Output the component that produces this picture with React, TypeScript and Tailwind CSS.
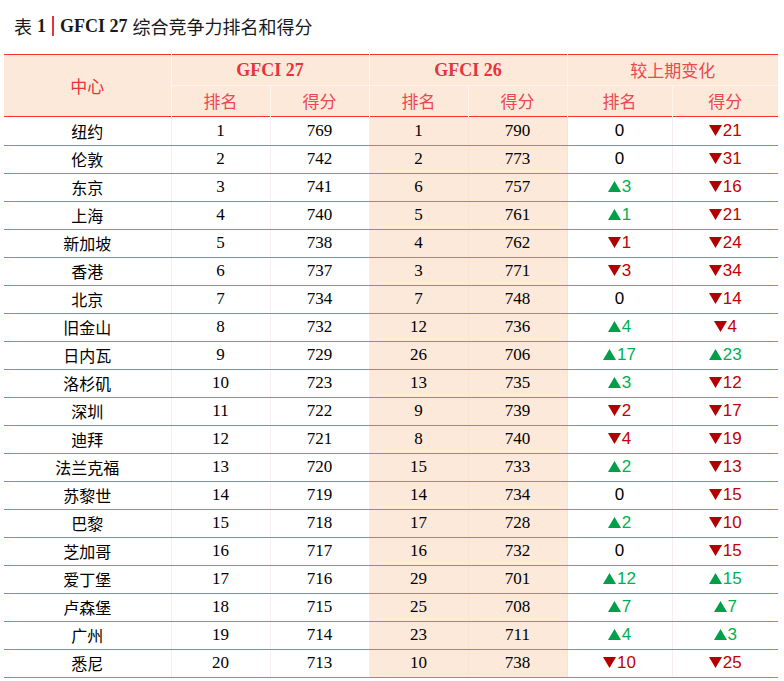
import React from "react";

type Row = [string, number, number, number, number, number, number];

// city, gfci27 rank, gfci27 score, gfci26 rank, gfci26 score, rank change, score change
const rows: Row[] = [
  ["纽约", 1, 769, 1, 790, 0, -21],
  ["伦敦", 2, 742, 2, 773, 0, -31],
  ["东京", 3, 741, 6, 757, 3, -16],
  ["上海", 4, 740, 5, 761, 1, -21],
  ["新加坡", 5, 738, 4, 762, -1, -24],
  ["香港", 6, 737, 3, 771, -3, -34],
  ["北京", 7, 734, 7, 748, 0, -14],
  ["旧金山", 8, 732, 12, 736, 4, -4],
  ["日内瓦", 9, 729, 26, 706, 17, 23],
  ["洛杉矶", 10, 723, 13, 735, 3, -12],
  ["深圳", 11, 722, 9, 739, -2, -17],
  ["迪拜", 12, 721, 8, 740, -4, -19],
  ["法兰克福", 13, 720, 15, 733, 2, -13],
  ["苏黎世", 14, 719, 14, 734, 0, -15],
  ["巴黎", 15, 718, 17, 728, 2, -10],
  ["芝加哥", 16, 717, 16, 732, 0, -15],
  ["爱丁堡", 17, 716, 29, 701, 12, 15],
  ["卢森堡", 18, 715, 25, 708, 7, 7],
  ["广州", 19, 714, 23, 711, 4, 3],
  ["悉尼", 20, 713, 10, 738, -10, -25],
];

const cjk = "font-['Noto_Sans_CJK_SC',sans-serif]";
const serif = "font-['Liberation_Serif','Noto_Sans_CJK_SC',serif]";
const sans = "font-['Liberation_Sans',Arial,sans-serif]";

function Change({ v }: { v: number }) {
  if (v === 0) return <span className="text-black">0</span>;
  const up = v > 0;
  return (
    <span className={`inline-flex items-center ${up ? "text-[#00b050]" : "text-[#c00000]"}`}>
      <svg width="13" height="11" viewBox="0 0 13 11" className="mr-[1px]">
        {up ? (
          <polygon points="6.5,0 13,11 0,11" fill="#00a04a" />
        ) : (
          <polygon points="0,0 13,0 6.5,11" fill="#b00000" />
        )}
      </svg>
      {Math.abs(v)}
    </span>
  );
}

export default function App() {
  const td = "h-[28px] p-0 text-center border-b border-[#ff6060] border-r border-r-[#f6eeee] align-middle";
  const hb = "border-r border-r-[#fff3ec]";
  return (
    <div className="w-[784px] h-[681px] bg-white overflow-hidden">
      <div className="flex items-center h-[26px] mt-[13px] ml-[14px] text-[18px] text-[#1a1a1a] leading-none">
        <span className={cjk}>表</span>
        <span className={`${serif} font-bold ml-[5px]`}>1</span>
        <span className="w-[2px] h-[20px] bg-[#e8333a] mx-[6px]" />
        <span className={`${serif} font-bold`}>GFCI 27</span>
        <span className={`${cjk} ml-[5px]`}>综合竞争力排名和得分</span>
      </div>

      <table className="ml-[4px] mt-[15px] w-[774px] border-collapse table-fixed">
        <colgroup>
          <col className="w-[167px]" />
          <col className="w-[99px]" />
          <col className="w-[99px]" />
          <col className="w-[99px]" />
          <col className="w-[99px]" />
          <col className="w-[105px]" />
          <col className="w-[106px]" />
        </colgroup>
        <thead className="bg-[#fce9da] text-[#e8333a]">
          <tr className="border-t border-t-[#ff3030]">
            <th rowSpan={2} className={`${cjk} font-normal text-[17px] ${hb}`}>
              中心
            </th>
            <th colSpan={2} className={`${serif} h-[31px] font-bold text-[18px] border-b border-b-[#fff3ec] ${hb}`}>
              GFCI 27
            </th>
            <th colSpan={2} className={`${serif} font-bold text-[18px] border-b border-b-[#fff3ec] ${hb}`}>
              GFCI 26
            </th>
            <th colSpan={2} className={`${cjk} font-normal text-[17px] text-[#e84a4f] border-b border-b-[#fff3ec]`}>
              较上期变化
            </th>
          </tr>
          <tr>
            {["排名", "得分", "排名", "得分", "排名", "得分"].map((t, i) => (
              <th
                key={i}
                className={`${cjk} h-[31px] font-normal text-[17px] text-[#e84a4f] ${i < 5 ? hb : ""}`}
              >
                {t}
              </th>
            ))}
          </tr>
        </thead>
        <tbody className="text-[17px] text-black">
          <tr className="h-0">
            <td colSpan={7} className="p-0 h-0 border-t border-t-[#ff3030]" />
          </tr>
          {rows.map((r) => (
            <tr key={r[0]}>
              <td className={`${td} ${cjk} text-[16px]`}>{r[0]}</td>
              <td className={`${td} ${serif}`}>{r[1]}</td>
              <td className={`${td} ${serif}`}>{r[2]}</td>
              <td className={`${td} ${serif} bg-[#fce9da] border-r-[#fbe3d3]`}>{r[3]}</td>
              <td className={`${td} ${serif} bg-[#fce9da] border-r-[#fbe3d3]`}>{r[4]}</td>
              <td className={`${td} ${sans}`}>
                <Change v={r[5]} />
              </td>
              <td className={`${td} ${sans} border-r-0`}>
                <Change v={r[6]} />
              </td>
            </tr>
          ))}
        </tbody>
      </table>
    </div>
  );
}
